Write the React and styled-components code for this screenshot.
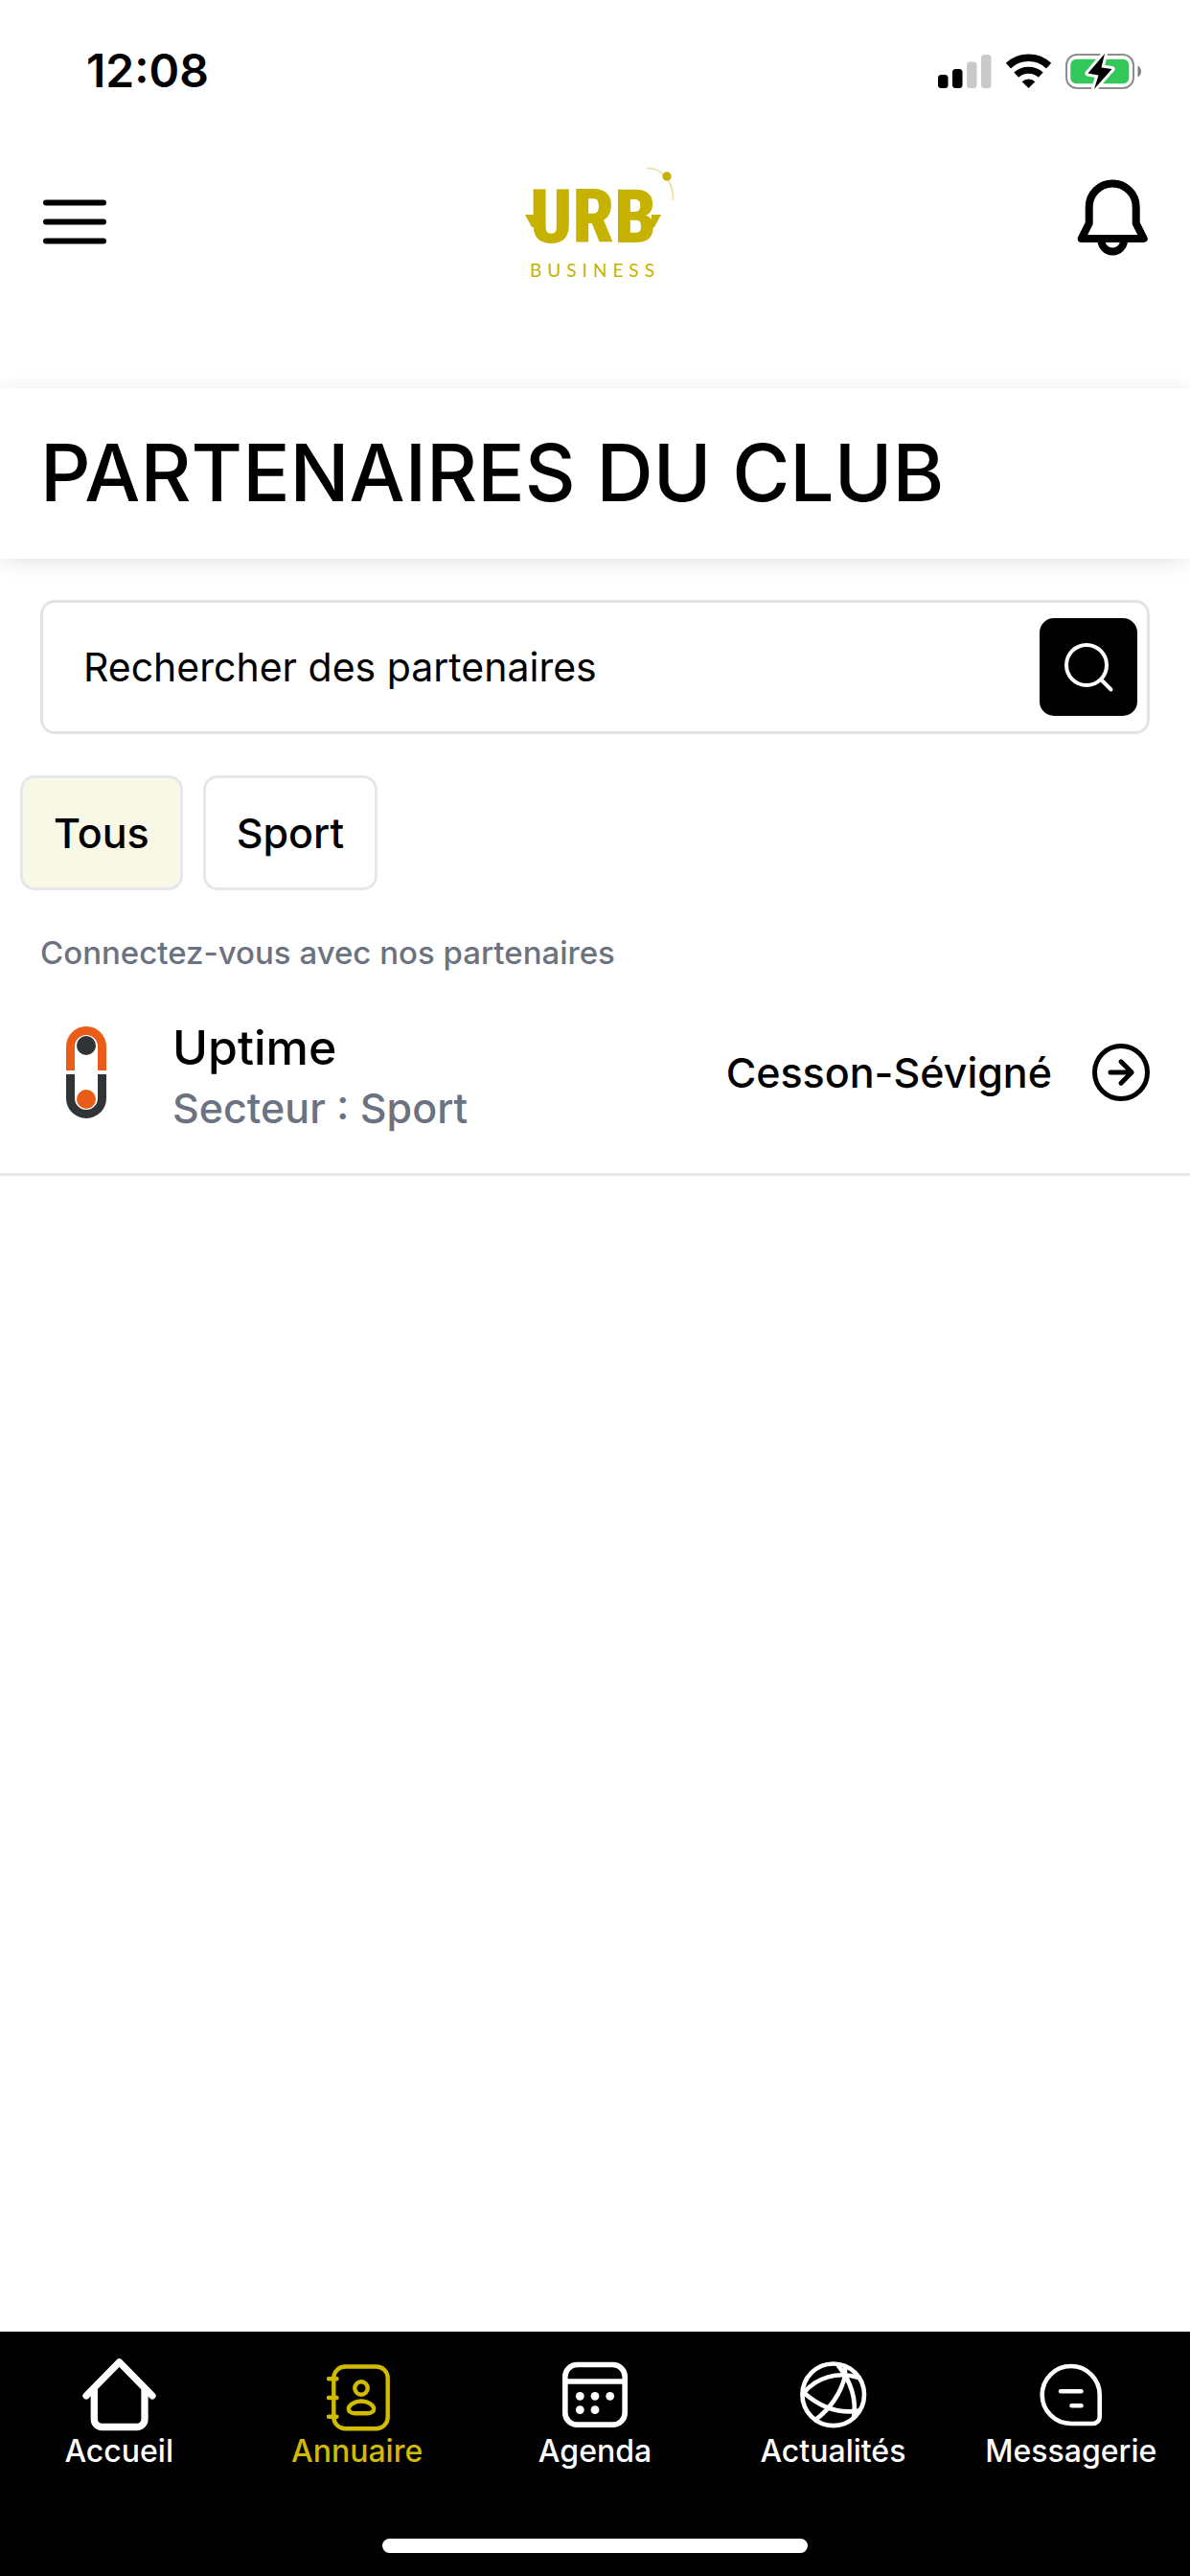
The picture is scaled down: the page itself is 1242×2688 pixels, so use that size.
import React, { useState } from 'react'
import styled, { createGlobalStyle } from 'styled-components'

// STYLES
const GlobalStyle = createGlobalStyle`
    * {
        box-sizing: border-box;
    }
    body {
        margin: 0;
        background: #fff;
        color: #000;
        font-family: Inter, 'Liberation Sans', sans-serif;
    }
    button, input {
        font: inherit;
        color: inherit;
    }
`

const Page = styled.div`
    display: flex;
    flex-direction: column;
    min-height: 100vh;
`

const StatusBar = styled.div`
    display: flex;
    align-items: center;
    justify-content: space-between;
    height: 148px;
    padding: 0 51px 0 90px;
`

const Clock = styled.time`
    font-size: 48px;
    font-weight: 600;
    line-height: 60px;
`

const StatusIcons = styled.div`
    display: flex;
    align-items: center;
    gap: 15px;

    svg {
        overflow: visible;
    }
`

const Header = styled.header`
    display: grid;
    grid-template-columns: 1fr auto 1fr;
    align-items: center;
    padding: 24px 42px 113px;
`

const IconButton = styled.button`
    display: flex;
    justify-self: ${({ $end }) => ($end ? 'end' : 'start')};
    padding: 0;
    border: 0;
    background: none;
`

const TitleBar = styled.div`
    padding: 41px 42px;
    background: #fff;
    box-shadow: 0 3px 24px -3px rgba(0, 0, 0, 0.14);
`

const Title = styled.h1`
    margin: 0;
    font-size: 82px;
    font-weight: 500;
    line-height: 96px;
`

const SearchForm = styled.form`
    display: flex;
    align-items: center;
    height: 140px;
    margin: 43px 42px 0;
    padding: 0 10px 0 42px;
    border: 3px solid #e3e3e3;
    border-radius: 15px;
`

const SearchInput = styled.input`
    flex: 1;
    min-width: 0;
    padding: 0;
    border: 0;
    outline: 0;
    background: none;
    font-size: 41px;
    line-height: 60px;

    &::placeholder {
        color: #000;
        opacity: 1;
    }
`

const SearchButton = styled.button`
    display: flex;
    align-items: center;
    justify-content: center;
    width: 102px;
    height: 102px;
    padding: 0;
    border: 0;
    border-radius: 15px;
    background: #000;
`

const Filters = styled.div`
    display: flex;
    gap: 21px;
    margin-top: 43px;
    padding: 0 21px;
`

const Chip = styled.button`
    height: 120px;
    padding: 0 32px;
    border: 3px solid #e5e7eb;
    border-radius: 15px;
    background: ${({ $active }) => ($active ? '#f9f7e5' : '#fff')};
    font-size: 43px;
    font-weight: 500;
`

const Hint = styled.p`
    margin: 42px 42px 39px;
    color: #6b7280;
    font-size: 33px;
    font-weight: 500;
    line-height: 46px;
`

const PartnerList = styled.ul`
    margin: 0;
    padding: 0;
    list-style: none;
`

const PartnerLink = styled.a`
    display: flex;
    align-items: center;
    gap: 42px;
    padding: 0 42px 42px;
    border-bottom: 3px solid #e5e7eb;
    color: inherit;
    font-size: 43px;
    font-weight: 500;
    text-decoration: none;
`

const PartnerLogo = styled.div`
    display: flex;
    justify-content: center;
    width: 96px;
`

const PartnerInfo = styled.div`
    flex: 1;
`

const PartnerName = styled.div`
    font-size: 50px;
    line-height: 75px;
`

const PartnerSector = styled.div`
    color: #6b7280;
    line-height: 51px;
`

const BottomNav = styled.nav`
    margin-top: auto;
    padding: 26px 0 24px;
    background: #000;
`

const Tabs = styled.div`
    display: grid;
    grid-template-columns: repeat(5, 1fr);
`

const Tab = styled.a`
    display: flex;
    flex-direction: column;
    align-items: center;
    color: ${({ $active }) => ($active ? '#d0bb00' : '#fff')};
    font-size: 32px;
    font-weight: 500;
    line-height: 42px;
    text-decoration: none;
`

const HomeIndicator = styled.div`
    width: 444px;
    max-width: 60%;
    height: 15px;
    margin: 70px auto 0;
    border-radius: 8px;
    background: #fff;
`

// ICONS
const SignalIcon = () => (
    <svg width="56" height="36" viewBox="0 0 56 36" aria-hidden="true">
        <rect x="0" y="22" width="10.5" height="14" rx="3.5" />
        <rect x="15" y="16" width="10.5" height="20" rx="3.5" />
        <rect x="30" y="8.5" width="10.5" height="27.5" rx="3.5" fill="#c9c9c9" />
        <rect x="45" y="1" width="10.5" height="35" rx="3.5" fill="#c9c9c9" />
    </svg>
)

const WifiIcon = () => (
    <svg width="47" height="36" viewBox="0 0 47 36" fill="none" stroke="#000" aria-hidden="true">
        <path d="M2.4 12.6a31 31 0 0 1 42.2 0" strokeWidth="7.6" />
        <path d="M10.7 22.2a19 19 0 0 1 25.6 0" strokeWidth="7.2" />
        <path d="M23.5 36l-6.8-6.8a10 10 0 0 1 13.6 0z" fill="#000" stroke="none" />
    </svg>
)

const BatteryIcon = () => (
    <svg width="79" height="39" viewBox="0 0 79 39" aria-hidden="true">
        <rect x="1" y="2" width="70" height="35" rx="11" fill="none" stroke="#8e8e8e" strokeWidth="2" />
        <rect x="5.3" y="6.7" width="61" height="25.6" rx="6" fill="#34c759" />
        <path d="M75.5 13.5c4.6 1.8 4.6 10.2 0 12z" fill="#7d7d7d" />
        <path
            d="M41 1L23.5 21.5 34.5 23.5 30 38 48.5 17 37.5 15.5z"
            fill="#000"
            stroke="#fff"
            strokeWidth="6"
            strokeLinejoin="round"
            paintOrder="stroke"
        />
    </svg>
)

const MenuIcon = () => (
    <svg width="72" height="60" viewBox="0 0 72 60" stroke="#000" strokeWidth="6" strokeLinecap="round" aria-hidden="true">
        <path d="M6 9.5h60M6 29.5h60M6 49.5h60" />
    </svg>
)

const BellIcon = () => (
    <svg width="76" height="90" viewBox="0 0 76 90" fill="none" stroke="#000" strokeWidth="8" strokeLinejoin="round" aria-hidden="true">
        <path d="M12.7 29a24.5 24.5 0 0 1 49 0v17l8 16h-65l8-16z" />
        <path d="M25.5 64c0 6 5 11.5 11.7 11.5S49 70 49 64" />
    </svg>
)

const ClubLogo = () => (
    <svg width="164" height="120" viewBox="-4 0 164 120" fill="#c6b200" role="img" aria-label="URB Business">
        <text
            x="76"
            y="81"
            textAnchor="middle"
            fontFamily="'Roboto Condensed', Roboto, sans-serif"
            fontSize="77"
            fontWeight="900"
        >
            URB
        </text>
        <path d="M5 52h10v13h-3zM147 52h-10v13h3z" />
        <text x="78" y="117" textAnchor="middle" fontFamily="Lato, sans-serif" fontSize="19" letterSpacing="6">BUSINESS</text>
        <path d="M132 4c12-2 28 10 27.5 33" fill="none" stroke="#c6b200" strokeOpacity="0.4" strokeWidth="1.5" />
        <circle cx="153" cy="12" r="4.7" />
    </svg>
)

const SearchIcon = () => (
    <svg width="54" height="54" viewBox="0 0 54 54" fill="none" stroke="#fff" strokeWidth="4" strokeLinecap="round" aria-hidden="true">
        <circle cx="25" cy="25" r="21" />
        <path d="M40.5 40.5l10 10" />
    </svg>
)

const UptimeLogo = () => (
    <svg width="42" height="96" viewBox="0 0 42 96" fill="none" strokeWidth="9" role="img" aria-label="Uptime">
        <path d="M4.5 46V21a16.5 16.5 0 0 1 33 0v25" stroke="#ea5d18" />
        <path d="M4.5 50v25a16.5 16.5 0 0 0 33 0V50" stroke="#303437" />
        <circle cx="21" cy="20" r="10" fill="#303437" />
        <circle cx="21" cy="76" r="10" fill="#ea5d18" />
    </svg>
)

const ArrowCircleIcon = () => (
    <svg width="60" height="60" viewBox="0 0 60 60" fill="none" stroke="#000" strokeWidth="5" strokeLinecap="round" strokeLinejoin="round" aria-hidden="true">
        <circle cx="30" cy="30" r="27.5" />
        <path d="M19 30h22M30 18.8L41.2 30 30 41.2" />
    </svg>
)

const TabIcon = ({ weight, children }) => (
    <svg width="78" height="78" viewBox="0 0 78 78" fill="none" stroke="currentColor" strokeWidth={weight} strokeLinecap="round" strokeLinejoin="round" aria-hidden="true">
        {children}
    </svg>
)

const HomeIcon = () => (
    <TabIcon weight="7.3">
        <path d="M5 41L39.5 5.8 74 41" />
        <path d="M13.3 34v31.5a8 8 0 0 0 8 8h36.7a8 8 0 0 0 8-8V34" />
    </TabIcon>
)

const DirectoryIcon = () => (
    <TabIcon weight="4.4">
        <rect x="14.3" y="10.5" width="56.4" height="64.8" rx="12" />
        <path d="M9 23.3h8.5M9 43h8.5M9 62.7h8.5" />
        <circle cx="43" cy="33" r="6.7" />
        <path d="M43 46.5c7 0 13.2 4.5 13.2 8.2 0 2.6-3.2 4.6-6.7 4.6h-13c-3.5 0-6.7-2-6.7-4.6 0-3.7 6.2-8.2 13.2-8.2z" />
    </TabIcon>
)

const CalendarIcon = () => (
    <TabIcon weight="5.7">
        <rect x="7.8" y="8.5" width="62.4" height="62.7" rx="12.5" />
        <path d="M8 26h62" />
        <g fill="currentColor" stroke="none">
            <circle cx="23.3" cy="41.3" r="4.4" />
            <circle cx="39" cy="41.3" r="4.4" />
            <circle cx="54.7" cy="41.3" r="4.4" />
            <circle cx="23.3" cy="55.7" r="4.4" />
            <circle cx="39" cy="55.7" r="4.4" />
        </g>
    </TabIcon>
)

const NewsIcon = () => (
    <TabIcon weight="4.6">
        <circle cx="39.7" cy="39.8" r="32.3" />
        <path d="M9 37.7C22 22 44 15 66.5 22" />
        <path d="M9 37.7C25 52 45 60 67 56.5" />
        <path d="M45 9.5C58 26 64 45 61 64" />
        <path d="M52 12v8C48 38 36 55 21 66" />
    </TabIcon>
)

const MessageIcon = () => (
    <TabIcon weight="4.6">
        <path d="M38.7 10a30 30 0 0 1 30 30v23a7 7 0 0 1-7 7h-23a30 30 0 0 1 0-60z" />
        <path d="M28 36.3h21.5M39.5 51.3h10" />
    </TabIcon>
)

const filters = ['Tous', 'Sport']

const partners = [
    { name: 'Uptime', sector: 'Sport', city: 'Cesson-Sévigné', Logo: UptimeLogo },
]

const tabs = [
    { label: 'Accueil', Icon: HomeIcon },
    { label: 'Annuaire', Icon: DirectoryIcon },
    { label: 'Agenda', Icon: CalendarIcon },
    { label: 'Actualités', Icon: NewsIcon },
    { label: 'Messagerie', Icon: MessageIcon },
]

const App = () => {
    const [filter, setFilter] = useState('Tous')
    const [search, setSearch] = useState('')

    const visiblePartners = partners.filter((partner) => (
        (filter === 'Tous' || partner.sector === filter) &&
        partner.name.toLowerCase().includes(search.toLowerCase())
    ))

  return (
    <>
    <GlobalStyle />
    <Page>
        <StatusBar>
            <Clock>12:08</Clock>
            <StatusIcons>
                <SignalIcon />
                <WifiIcon />
                <BatteryIcon />
            </StatusIcons>
        </StatusBar>
        <Header>
            <IconButton type="button" aria-label="Menu"><MenuIcon /></IconButton>
            <ClubLogo />
            <IconButton type="button" aria-label="Notifications" $end><BellIcon /></IconButton>
        </Header>
        <main>
            <TitleBar>
                <Title>PARTENAIRES DU CLUB</Title>
            </TitleBar>
            <SearchForm role="search" onSubmit={(e) => e.preventDefault()}>
                <SearchInput
                    type="text"
                    aria-label="Rechercher des partenaires"
                    placeholder="Rechercher des partenaires"
                    value={search}
                    onChange={(e) => setSearch(e.target.value)}
                />
                <SearchButton type="submit" aria-label="Rechercher"><SearchIcon /></SearchButton>
            </SearchForm>
            <Filters>
                {filters.map((name) => (
                    <Chip key={name} type="button" $active={filter === name} onClick={() => setFilter(name)}>
                        {name}
                    </Chip>
                ))}
            </Filters>
            <Hint>Connectez-vous avec nos partenaires</Hint>
            <PartnerList>
                {visiblePartners.map(({ name, sector, city, Logo }) => (
                    <li key={name}>
                        <PartnerLink href="#">
                            <PartnerLogo><Logo /></PartnerLogo>
                            <PartnerInfo>
                                <PartnerName>{name}</PartnerName>
                                <PartnerSector>Secteur : {sector}</PartnerSector>
                            </PartnerInfo>
                            <span>{city}</span>
                            <ArrowCircleIcon />
                        </PartnerLink>
                    </li>
                ))}
            </PartnerList>
        </main>
        <BottomNav>
            <Tabs>
                {tabs.map(({ label, Icon }) => (
                    <Tab key={label} href="#" $active={label === 'Annuaire'}>
                        <Icon />
                        {label}
                    </Tab>
                ))}
            </Tabs>
            <HomeIndicator />
        </BottomNav>
    </Page>
    </>
  )
}

export default App;
